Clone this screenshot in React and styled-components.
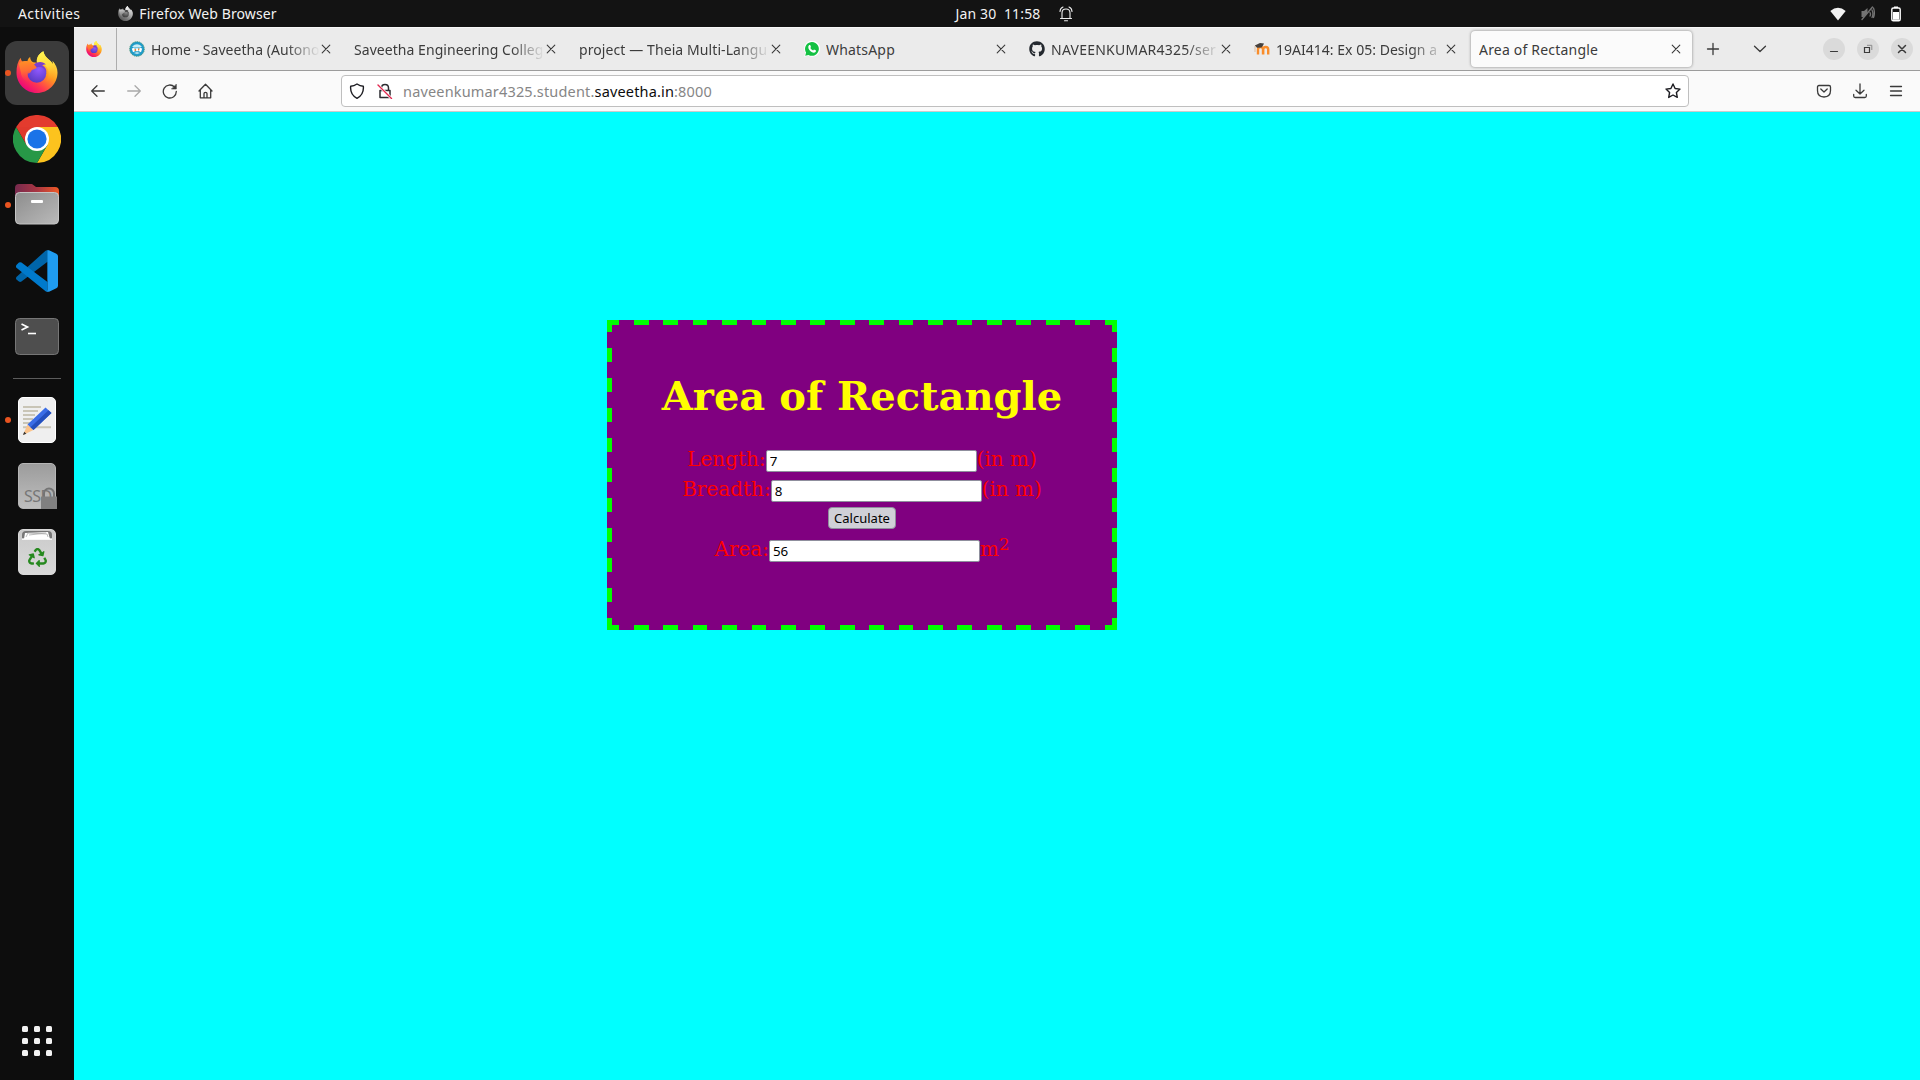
import React from "react";
import styled, { createGlobalStyle, css } from "styled-components";
import { FaGithub, FaRecycle } from "react-icons/fa";

const Global = createGlobalStyle`
  * { box-sizing: border-box; }
  body { margin: 0; background: #0ff; overflow: hidden; }
  svg { display: block; flex: none; }
`;

const ui = css`
  font-family: "Noto Sans", "Open Sans", sans-serif;
  font-size: 14px;
`;

const Desktop = styled.div`
  ${ui}
  width: 1920px;
  height: 1080px;
  display: grid;
  grid-template: 27px 1fr / 74px 1fr;
`;

/* ---------- top bar ---------- */
const TopBar = styled.header`
  grid-column: 1 / -1;
  background: #131313;
  color: #f2f2f2;
  display: grid;
  grid-template-columns: 1fr auto 1fr;
  align-items: center;
  height: 27px;
  line-height: 27px;
`;
const TopGroup = styled.div`
  display: flex;
  align-items: center;
  height: 27px;
  gap: ${(p) => p.$gap || 0}px;
  padding: ${(p) => p.$pad || 0};
  justify-content: ${(p) => p.$justify || "flex-start"};
`;
const Text = styled.span`
  letter-spacing: ${(p) => p.$track || 0}px;
  white-space: pre;
`;
const AppMenu = styled.div`
  display: flex;
  align-items: center;
  gap: 6px;
`;

/* ---------- dock ---------- */
const Dock = styled.nav`
  background: #0d0d0d;
  display: flex;
  flex-direction: column;
  padding-top: 13px;
`;
const Slot = styled.div`
  height: 66px;
  display: grid;
  grid-template-columns: 5px 64px 5px;
  align-items: center;
`;
const Tile = styled.div`
  width: 64px;
  height: 64px;
  border-radius: 12px;
  background: ${(p) => (p.$active ? "#3b3b3b" : "transparent")};
  display: grid;
  place-items: center;
  padding-bottom: ${(p) => p.$lift || 0}px;
`;
const Dot = styled.i`
  width: 6px;
  height: 6px;
  margin-left: 5px;
  border-radius: 50%;
  background: ${(p) => (p.$on ? "#e95420" : "transparent")};
  z-index: 1;
`;
const Divider = styled.div`
  width: 48px;
  height: 1px;
  margin: 8px auto;
  background: #5c5c5c;
`;
const AppGrid = styled.div`
  margin: auto auto 24px;
  display: grid;
  grid-template-columns: repeat(3, 6px);
  gap: 6px;
`;
const GridDot = styled.i`
  width: 6px;
  height: 6px;
  border-radius: 1.5px;
  background: #f2f2f2;
`;

/* ---------- browser ---------- */
const Browser = styled.main`
  display: flex;
  flex-direction: column;
  min-width: 0;
`;
const TabStrip = styled.div`
  height: 44px;
  background: #ebebeb;
  border-top: 1px solid #f7f7f7;
  border-bottom: 1px solid #9c9c9c;
  display: flex;
  color: #3c3c3c;
`;
const PinnedTab = styled.div`
  width: 43px;
  border-right: 1px solid #adadad;
  display: flex;
  align-items: center;
  padding-left: 12px;
  margin-right: 2px;
`;
const Tab = styled.div`
  width: 221px;
  height: 36px;
  margin: 3px 2px;
  padding: 0 11px 0 8px;
  display: flex;
  align-items: center;
  border-radius: 4px;
  ${(p) =>
    p.$active &&
    css`
      background: #fbfbfb;
      box-shadow: 0 0 3px rgba(0, 0, 0, 0.45);
    `}
`;
const Favicon = styled.span`
  width: 16px;
  margin-right: 6px;
  display: grid;
  place-items: center;
`;
const TabLabel = styled.span`
  flex: 1;
  min-width: 0;
  overflow: hidden;
  white-space: pre;
  line-height: 36px;
  padding-top: 1px;
  letter-spacing: ${(p) => p.$track || 0}px;
  mask-image: ${(p) => (p.$fade ? "linear-gradient(90deg, #000 calc(100% - 34px), transparent)" : "none")};
`;
const CloseButton = styled.span`
  width: 10px;
  margin-left: 1px;
`;
const StripActions = styled.div`
  display: flex;
  align-items: center;
  padding-left: 11px;
  gap: 31px;
`;
const WindowButtons = styled.div`
  margin-left: auto;
  padding-right: 7px;
  display: flex;
  align-items: center;
  gap: 12px;
`;
const WindowButton = styled.span`
  width: 22px;
  height: 22px;
  border-radius: 50%;
  background: #dadada;
  display: grid;
  place-items: center;
`;
const Toolbar = styled.div`
  height: 41px;
  background: #fafafa;
  border-bottom: 1px solid #cbcbcb;
  display: flex;
  align-items: center;
`;
const NavButtons = styled.div`
  width: 267px;
  padding-left: 16px;
  display: flex;
  gap: 20px;
`;
const UrlBar = styled.div`
  width: 1348px;
  height: 32px;
  border: 1px solid #bfbfbf;
  border-radius: 4px;
  background: #fff;
  display: flex;
  align-items: center;
  padding: 0 7px;
`;
const Url = styled.span`
  margin-left: 10px;
  flex: 1;
  font-size: 14.5px;
  line-height: 30px;
  letter-spacing: 0.165px;
  color: #868686;
`;
const Domain = styled.span`
  color: #0c0c0d;
`;
const Shield = styled.span`
  margin-right: 12px;
`;
const ToolActions = styled.div`
  margin-left: auto;
  padding-right: 16px;
  display: flex;
  gap: 20px;
`;

/* ---------- page ---------- */
const Page = styled.section`
  flex: 1;
  background: #0ff;
  padding: 208px 0 0 533px;
`;
const dashes = (dir, dash, period) =>
  `repeating-linear-gradient(${dir}, #0f0 0 ${dash}px, transparent ${dash}px ${period - 2.45}px, #0f0 ${period - 2.45}px ${period}px)`;
const Card = styled.div`
  width: 510px;
  height: 310px;
  padding-top: 52px;
  text-align: center;
  font: 20px "DejaVu Serif", serif;
  color: #f00;
  background-color: #800080;
  background-image: ${dashes("90deg", 12.25, 29.41)}, ${dashes("90deg", 12.25, 29.41)},
    ${dashes("180deg", 12.5, 30)}, ${dashes("180deg", 12.5, 30)};
  background-size: 100% 5px, 100% 5px, 5px 100%, 5px 100%;
  background-position: top, bottom, left, right;
  background-repeat: no-repeat;
`;
const Title = styled.h1`
  margin: 0 0 27px;
  font-size: 40px;
  line-height: 47px;
  color: #ff0;
`;
const Row = styled.label`
  height: 30px;
  display: flex;
  justify-content: center;
  align-items: flex-start;
  line-height: 26px;
`;
const Field = styled.input`
  width: 211px;
  height: 22px;
  margin: 4px 0 0;
  padding: 0 3px 1px;
  border: 1px solid #8f8f9d;
  border-radius: 2px;
  background: #fff;
  color: #000;
  font: 13.33px "Noto Sans", "Open Sans", sans-serif;
  outline: none;
`;
const Power = styled.sup`
  font-size: 16.67px;
  line-height: 13px;
  margin-top: 2px;
`;
const Calculate = styled.button`
  width: 68px;
  height: 22px;
  margin-top: 1px;
  padding: 0;
  border: 1px solid #8f8f9d;
  border-radius: 4px;
  background: #d0d0d7;
  color: #000;
  font: 13px/19px "Noto Sans", "Open Sans", sans-serif;
`;

/* ---------- icons ---------- */
function Firefox({ size, gray, id }) {
  const c = gray
    ? ["#f4f4f4", "#a9a9a9", "#777", "#555", "#8b8b8b", "#3c3c3c", "#c8c8c8"]
    : ["#fff44f", "#ff9a1f", "#ff3750", "#e8007f", "#9059ff", "#5b3bc4", "#ff8f26"];
  return (
    <svg width={size} height={size} viewBox="0 0 42 43">
      <defs>
        <linearGradient id={id + "a"} x1="0.85" y1="0.1" x2="0.2" y2="0.95">
          <stop offset="0" stopColor={c[0]} />
          <stop offset=".4" stopColor={c[1]} />
          <stop offset=".72" stopColor={c[2]} />
          <stop offset="1" stopColor={c[3]} />
        </linearGradient>
        <linearGradient id={id + "b"} x1=".4" y1="0" x2=".6" y2="1">
          <stop offset="0" stopColor={c[0]} />
          <stop offset=".5" stopColor={gray ? "#ccc" : "#ffd83b"} />
          <stop offset="1" stopColor={c[1]} stopOpacity="0" />
        </linearGradient>
        <linearGradient id={id + "d"} x1=".3" y1="0" x2=".4" y2="1">
          <stop offset="0" stopColor={c[6]} />
          <stop offset=".45" stopColor={gray ? "#999" : "#ff6a35"} />
          <stop offset="1" stopColor={c[2]} stopOpacity="0" />
        </linearGradient>
        <radialGradient id={id + "c"} cx=".6" cy=".3" r=".7">
          <stop offset="0" stopColor={c[4]} />
          <stop offset="1" stopColor={c[5]} />
        </radialGradient>
      </defs>
      <path d="M4.3 6.8c.2 2 .9 3.200 2.200 4.100 1.500-.7 3.200-.8 4.700-.5C11.500 8.700 12.500 7.300 14 6.200c0 2.500 1.200 4.500 3.200 5.300L21 12c-.9-5 1.800-9.300 6.500-11.800.7 4.300 3.500 6.600 6.700 9.400 1.200 1.100 2.300 2.500 3 4 .2-1.200 0-2.300-.3-3.300C40.300 14 42 18 42 22c0 11.600-9.400 21-21 21S0 33.600 0 22C0 15.500 1.300 10.700 4.300 6.800z" fill={`url(#${id}a)`} />
      <path d="M27.500.2c-4.700 2.500-7.400 6.800-6.500 11.800 4.600-.3 10 2.600 11.500 7.500 1.200 5-.2 9.500-3.500 12.500 6.500-2 11.500-7 11-15-.6-3-1.500-5-3.100-6.700.3 1 .5 2.100.3 3.300-.7-1.500-1.800-2.900-3-4C31 6.800 28.200 4.500 27.500.2z" fill={`url(#${id}b)`} />
      <circle cx="20.800" cy="22.800" r="9.700" fill={`url(#${id}c)`} />
      <path d="M2.500 13c3-3 7.500-3.500 11-1.500 2 .9 3.800 1.200 5.500 2.200 1 .8 1.600 2 1.800 3.300-.8 1.500-4.800 2-5.600 3.200-.5 1.700-1.500 2.700-3.700 3-2 5.800 4.500 9.800 10.500 8.800-8 3.500-17-2-17.500-10-.5-3-1.500-6-2-9z" fill={`url(#${id}d)`} />
      <path d="M18 13.800c4-3.800 10-3 12 0-2 0-3 .3-3.500 1.200 3 1 4.500 4 4 7-1.500-4.500-5-6.500-9.700-5z" fill={gray ? "#444" : "#7a3fd0"} />
    </svg>
  );
}
const Chrome = () => (
  <svg width="48" height="48" viewBox="0 0 48 48">
    <path d="M24 24L3.200 12A24 24 0 0 1 44.800 12z" fill="#e33b2e" />
    <path d="M24 12h20.800A24 24 0 0 1 24 48l10.400-18z" fill="#fcc31e" />
    <path d="M3.200 12A24 24 0 0 0 24 48l10.400-18-20.800 0z" fill="#279847" />
    <path d="M3.200 12L13.600 30 24 24 24 12z" fill="#e0392d" />
    <circle cx="24" cy="24" r="12" fill="#fff" />
    <circle cx="24" cy="24" r="9.600" fill="#1a73e8" />
  </svg>
);
const Files = () => (
  <svg width="44" height="42" viewBox="0 0 44 42">
    <defs>
      <linearGradient id="fo"><stop stopColor="#762a4e" /><stop offset=".5" stopColor="#a93643" /><stop offset="1" stopColor="#ef5a26" /></linearGradient>
      <linearGradient id="fg" x2="1" y2="1"><stop stopColor="#8d8d8d" /><stop offset="1" stopColor="#bababa" /></linearGradient>
    </defs>
    <path d="M0 5Q0 1 4 1h13l4 3h19q4 0 4 4v10H0z" fill="url(#fo)" />
    <rect x=".5" y="9.500" width="43" height="31.500" rx="4" fill="url(#fg)" stroke="#c5c5c5" />
    <rect x="16" y="17" width="12" height="3" rx="1" fill="#fff" />
  </svg>
);
const VSCode = () => (
  <svg width="42" height="42" viewBox="0 0 100 100">
    <path d="M96 11L76 1Q72 0 69 3L1 64q-2 3 0 6l6 5q3 2 6 0L75 28V72L96 89z" fill="#0065a9" />
    <path d="M1 36l6-6q3-2 6 0l62 46v23Q72 100 69 97L1 42q-2-3 0-6z" fill="#007acc" />
    <path d="M75 0q3 0 5 1l16 8q4 2 4 6v70q0 4-4 6l-16 8q-3 1-7 0l2-3z" fill="#1f9cf0" />
  </svg>
);
const Terminal = () => (
  <svg width="44" height="37" viewBox="0 0 44 37">
    <rect x=".5" y=".5" width="43" height="36" rx="4" fill="#4e4e4e" stroke="#767676" />
    <path d="M6.500 6l6 3-6 3" fill="none" stroke="#fff" strokeWidth="1.700" />
    <path d="M13 15.500h8" stroke="#fff" strokeWidth="1.600" />
  </svg>
);
const Editor = () => (
  <svg width="38" height="46" viewBox="0 0 38 46">
    <rect x=".5" y=".5" width="37" height="45" rx="4.500" fill="#efefef" stroke="#fff" />
    <path d="M5 10h18M5 14h15M5 18h12M5 22h10M5 26h8M5 30.200h28" stroke="#c9c5b6" strokeWidth="2" />
    <path d="M5 38l4.500-10.500 6 5.500z" fill="#fbc38b" />
    <path d="M5 38l1.200-3.200 2.200 2z" fill="#333" />
    <path d="M9.500 27.500L27.500 10.500l6 5.500L15.500 33z" fill="#3a6de6" />
    <path d="M12.500 30.200L30.500 13.200l3 2.800L15.500 33z" fill="#2450bd" />
  </svg>
);
const DiskLabel = styled.span`
  grid-area: 1 / 1;
  align-self: end;
  padding: 0 0 1px 5px;
  font-size: 16px;
  line-height: 22px;
  letter-spacing: -0.5px;
  color: #777;
`;
const DiskBox = styled.div`
  width: 38px;
  height: 46px;
  display: grid;
  border: 1px solid #b5b5b5;
  border-radius: 5px;
  background: linear-gradient(#9c9c9c, #bebebe);
`;
const DiskLock = styled.span`
  grid-area: 1 / 1;
  align-self: end;
  justify-self: end;
  margin: 0 -2px -1px 0;
`;
const Disk = () => (
  <DiskBox>
    <DiskLabel>SSD</DiskLabel>
    <DiskLock>
      <svg width="16" height="22" viewBox="0 0 16 22">
        <path d="M3 10V6.500a5 5 0 0 1 10 0V10" fill="none" stroke="#747474" strokeWidth="2" />
        <path d="M0 9.500h16V22H0z" fill="#808080" />
      </svg>
    </DiskLock>
  </DiskBox>
);
const TrashBox = styled.div`
  width: 38px;
  height: 46px;
  border: 1px solid #d8d8d8;
  border-radius: 5px;
  background: linear-gradient(#cacaca, #d9d9d9);
  display: flex;
  flex-direction: column;
  align-items: center;
  gap: 8px;
  color: #26891f;
`;
const Trash = () => (
  <TrashBox>
    <svg width="32" height="10" viewBox="0 0 32 10">
      <path d="M1 8V5q0-4 4-4h22q4 0 4 4v3z" fill="#777" />
      <path d="M3 9l1-6 23-1 2 7z" fill="#fff" />
      <path d="M5 7l2-4 19 1 1 3M8 5l17-2" fill="none" stroke="#aaa" strokeWidth=".8" />
      <path d="M1 9.500h30" stroke="#f6f6f6" />
    </svg>
    <FaRecycle size={19} />
  </TrashBox>
);
const College = () => (
  <svg width="16" height="16" viewBox="0 0 16 16">
    <circle cx="8" cy="8" r="7.300" fill="#1e9bc9" stroke="#43947d" strokeWidth="1" strokeDasharray="1.200 .7" />
    <path d="M3.200 5.600Q8 .8 12.800 5.600L11.500 6.500H4.500z" fill="#c9ebf5" />
    <path d="M2.800 7.500l2.600-.8 1 3.200-2.400 1.300zM13.200 7.500l-2.600-.8-1 3.200 2.400 1.300z" fill="#fff" />
    <path d="M6.400 7.200h3.200v3H6.400z" fill="#fff" />
    <path d="M5.600 8h1.500v2H5.600zM9 7.500h1.300v1.800H9z" fill="#e5893a" />
    <path d="M4.800 12l3.200-1.300 3.200 1.300-3.200 1.300z" fill="#a9dcec" />
  </svg>
);
const WhatsApp = () => (
  <svg width="16" height="16" viewBox="0 0 16 16">
    <path d="M.2 15.800l1.100-4A8 8 0 1 1 4.300 14.700z" fill="#fff" />
    <path d="M1.200 14.800l.9-3.200A6.900 6.900 0 1 1 4.500 13.900z" fill="#14c143" />
    <path d="M5.200 4h1l.8 2-.7 1q1 1.800 2.800 2.500l.9-1 2 1v.8q-.6 1.500-2.200 1.400Q6 11 4.400 7.200 3.900 5 5.200 4z" fill="#fff" />
  </svg>
);
const Moodle = () => (
  <svg width="16" height="16" viewBox="0 0 16 16">
    <path d="M4 13.500V8.500q0-2.500 2.500-2.500T9 8.500v5M9.200 13.500v-5q0-2.500 2.500-2.500t2.500 2.500v5" fill="none" stroke="#f98d2b" strokeWidth="2.400" />
    <path d="M.8 4.500L6 2l4 .6L9 4.500 7.500 6.500 3 6.700z" fill="#45403d" />
    <path d="M1 5v6" stroke="#d9b18c" strokeWidth=".8" />
  </svg>
);
const Line = ({ w = 16, h = 16, d, color = "#3a3a3a", sw = 1.3, children, fill = "none" }) => (
  <svg width={w} height={h} viewBox={`0 0 ${w} ${h}`} fill={fill} stroke={color} strokeWidth={sw} strokeLinecap="round" strokeLinejoin="round">
    <path d={d} />
    {children}
  </svg>
);
const Close = () => <Line w={10} h={10} d="M1.200 1.200l7.600 7.600M8.800 1.200L1.200 8.800" sw={1.100} />;

const TABS = [
  { icon: <College />, text: "Home - Saveetha (Autono", track: 0.03, fade: true },
  { text: "Saveetha Engineering Colleg", track: 0.05, fade: true },
  { text: "project — Theia Multi-Langu", track: 0.09, fade: true },
  { icon: <WhatsApp />, text: "WhatsApp", track: 0.19 },
  { icon: <FaGithub size={16} color="#24292f" />, text: "NAVEENKUMAR4325/ser", track: 0.24, fade: true },
  { icon: <Moodle />, text: "19AI414: Ex 05: Design a", track: 0.02, fade: true },
  { text: "Area of Rectangle", track: 0.2, active: true },
];

const DOCK = [
  { icon: <Firefox size={42} id="dock" />, on: true, active: true, lift: 2 },
  { icon: <Chrome /> },
  { icon: <Files />, on: true, lift: 2 },
  { icon: <VSCode /> },
  { icon: <Terminal />, lift: 1 },
];
const DOCK_LOWER = [{ icon: <Editor />, on: true }, { icon: <Disk /> }, { icon: <Trash /> }];

const DockItem = ({ icon, on, active, lift }) => (
  <Slot>
    <Dot $on={on} />
    <Tile $active={active} $lift={lift}>{icon}</Tile>
  </Slot>
);

export default function App() {
  return (
    <Desktop>
      <Global />
      <TopBar>
        <TopGroup $gap={38} $pad="0 0 0 18px">
          <Text $track={0.4}>Activities</Text>
          <AppMenu>
            <Firefox size={15} gray id="menu" />
            <Text $track={0.1}>Firefox Web Browser</Text>
          </AppMenu>
        </TopGroup>
        <TopGroup $gap={18} $pad="0 0 0 108px">
          <Text $track={0.15}>Jan 30  11:58</Text>
          <Line w={14} h={16} color="#eee" sw={1.1} d="M1.500 12.500h11M3 12V7q0-4 4-4t4 4v5M4 1Q1.200 2 1 5.500M10 1q2.800 1 3 4.500">
            <path d="M5.500 14.800h3" />
          </Line>
        </TopGroup>
        <TopGroup $gap={15} $pad="0 18px 0 0" $justify="flex-end">
          <svg width="16" height="14" viewBox="0 0 16 14"><path d="M8 13.500L.3 4Q8-2.500 15.700 4z" fill="#f2f2f2" /></svg>
          <Line w={14} h={15} color="#747474" sw={1.300} d="M1 13.500L11.500 1M9 6.500q1 1.700 0 3.500M11 4q1.800 3.500 0 7.500M12.500 2q1.800 5 0 9.500">
            <path d="M.5 5H3L6.500 2v5l-4 4H.5z" fill="#747474" stroke="none" />
          </Line>
          <svg width="12" height="16" viewBox="0 0 12 16">
            <path d="M4 .5h4v1.500H4z" fill="#fff" />
            <rect x="1.800" y="2" width="8.400" height="12.800" rx="1.500" fill="none" stroke="#fff" strokeWidth="1.400" />
            <path d="M3 6h6v7.800H3z" fill="#fff" />
          </svg>
        </TopGroup>
      </TopBar>

      <Dock>
        {DOCK.map((d, i) => <DockItem key={i} {...d} />)}
        <Divider />
        {DOCK_LOWER.map((d, i) => <DockItem key={i} {...d} />)}
        <AppGrid>{Array.from({ length: 9 }, (_, i) => <GridDot key={i} />)}</AppGrid>
      </Dock>

      <Browser>
        <TabStrip>
          <PinnedTab><Firefox size={16} id="pin" /></PinnedTab>
          {TABS.map((t) => (
            <Tab key={t.text} $active={t.active}>
              {t.icon && <Favicon>{t.icon}</Favicon>}
              <TabLabel $track={t.track} $fade={t.fade}>{t.text}</TabLabel>
              <CloseButton><Close /></CloseButton>
            </Tab>
          ))}
          <StripActions>
            <Line d="M8 2.500v11M2.500 8h11" />
            <Line d="M2.500 5.200L8 10.500l5.500-5.300" />
          </StripActions>
          <WindowButtons>
            <WindowButton><Line w={10} h={10} sw={1.200} d="M1.500 7.500h7" /></WindowButton>
            <WindowButton>
              <svg width="10" height="10" viewBox="0 0 10 10" fill="none">
                <path d="M1.500 3.500h5v5h-5z" stroke="#3a3a3a" strokeWidth="1.200" />
                <path d="M4 1.300h4.800V6" stroke="#8a8a8a" />
              </svg>
            </WindowButton>
            <WindowButton><Line w={10} h={10} sw={1.500} d="M1.500 1.500l7 7M8.500 1.500l-7 7" /></WindowButton>
          </WindowButtons>
        </TabStrip>

        <Toolbar>
          <NavButtons>
            <Line d="M14.300 8H1.700M7 2.700L1.700 8 7 13.300" />
            <Line color="#a9a9a9" d="M1.700 8h12.600M9 2.700L14.300 8 9 13.300" />
            <Line d="M14.300 8.500A6.500 6.500 0 1 1 12.500 4">
              <path d="M14.300 1.500v4.500H9.800z" fill="#3a3a3a" strokeWidth=".6" />
            </Line>
            <Line d="M1 8L7.500 1.200 14 8M2.300 7v7.800h10.400V7M6 14.500v-4q0-1.200 1.500-1.200T9 10.500v4" />
          </NavButtons>
          <UrlBar>
            <Shield>
              <Line sw={1.400} color="#1d1d22" d="M8 1q3 2 6.300 2.200Q15.200 11.500 8 15.300 .8 11.500 1.700 3.200 5 3 8 1z" />
            </Shield>
            <Line sw={1.500} color="#2b2b30" d="M4.500 7V5q0-3.500 3.500-3.500T11.500 5v2M3 7.500h10v7H3z">
              <path d="M1 2l13.500 13.500" stroke="#fff" strokeWidth="2.800" />
              <path d="M1 2l13.500 13.500" stroke="#e22850" strokeWidth="1.400" />
            </Line>
            <Url>naveenkumar4325.student.<Domain>saveetha.in</Domain>:8000</Url>
            <Line sw={1.400} color="#1d1d22" d="M8 1l2.100 4.500 4.900.6-3.600 3.400.9 4.900L8 12l-4.300 2.400.9-4.900L1 6.100l4.900-.6z" />
          </UrlBar>
          <ToolActions>
            <Line d="M3 2.500h10q1.500 0 1.500 1.500v3.500Q14.500 13.800 8 14 1.500 13.800 1.500 7.500V4Q1.500 2.500 3 2.500zM4.800 6L8 9l3.200-3" />
            <Line d="M8 1v10M4 7.200L8 11l4-3.800M1.700 11.500V13q0 1.500 1.500 1.500h9.600q1.500 0 1.500-1.500v-1.500" />
            <Line d="M2.500 3.500h11M2.500 8h11M2.500 12.500h11" />
          </ToolActions>
        </Toolbar>

        <Page>
          <Card>
            <Title>Area of Rectangle</Title>
            <Row>Length:<Field defaultValue="7" />(in m)</Row>
            <Row>Breadth:<Field defaultValue="8" />(in m)</Row>
            <Row as="div"><Calculate>Calculate</Calculate></Row>
            <Row>Area:<Field defaultValue="56" />m<Power>2</Power></Row>
          </Card>
        </Page>
      </Browser>
    </Desktop>
  );
}
